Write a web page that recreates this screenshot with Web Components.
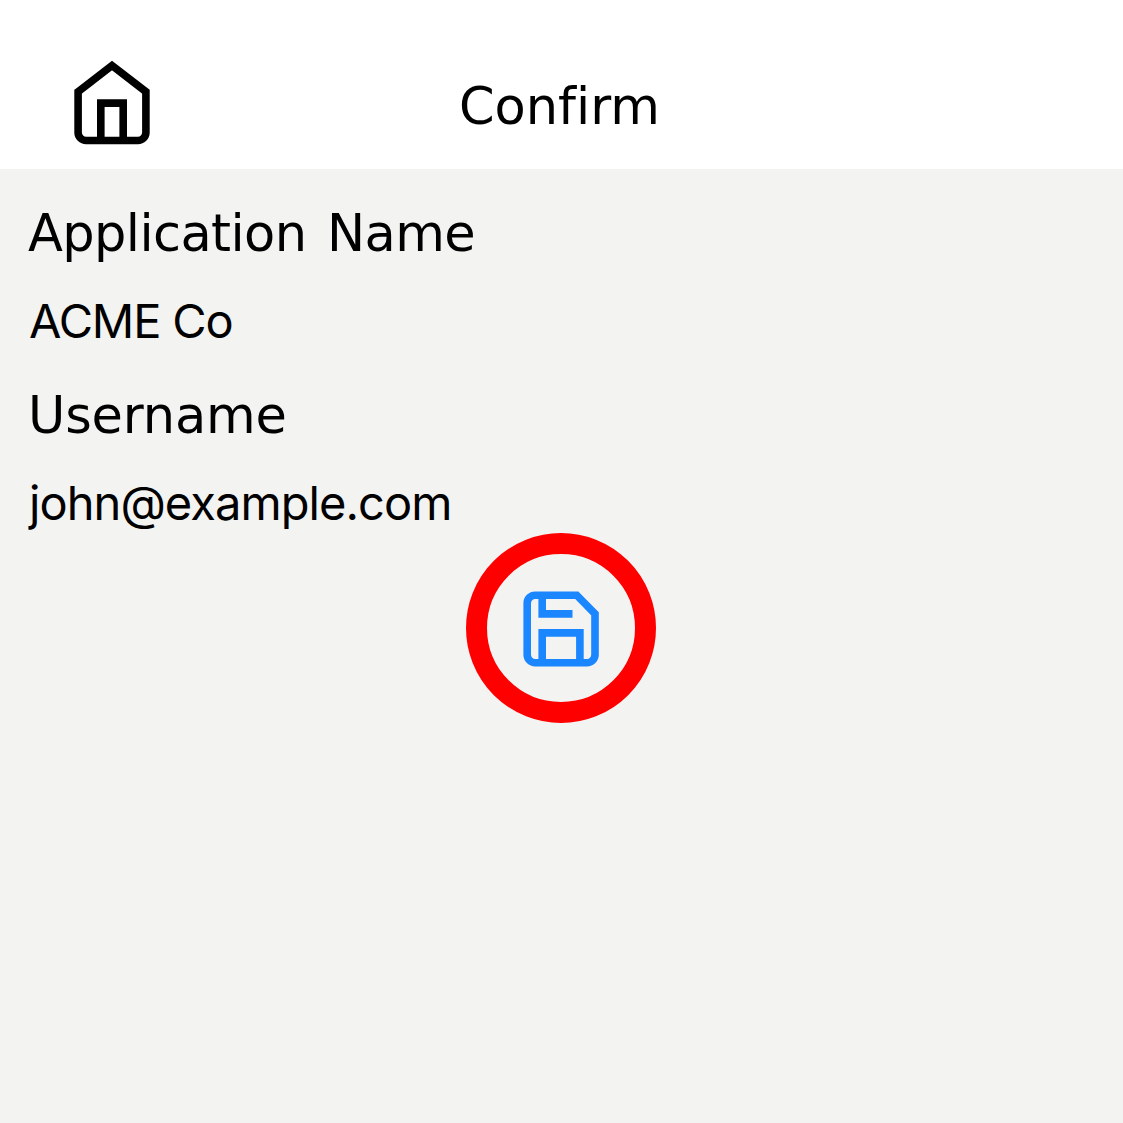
<!DOCTYPE html>
<html lang="en"><head><meta charset="utf-8"><title>Confirm</title>
<style>html,body{margin:0;background:#f3f3f1}</style></head><body>
<confirm-page></confirm-page>
<script>
class AppHeader extends HTMLElement{constructor(){super();this.attachShadow({mode:'open'}).innerHTML=`
<style>:host{display:grid;grid-template-columns:224px 1fr 224px;height:169px;background:#fff;color:#000}
.i{display:flex;justify-content:center;padding-top:58px}svg{display:block}
.t{text-align:center;padding-top:76px;margin-right:4px;font:51px/62px "DejaVu Sans",Verdana,sans-serif;font-variant-ligatures:none;white-space:nowrap}</style>
<div class="i"><svg width="90" height="90" viewBox="67 58 90 90" fill="none" stroke="#000" stroke-width="7.6"><path d="M78.100 91.700 112 65.600 145.900 91.700V132.500A8 8 0 0 1 137.900 140.500H86.100A8 8 0 0 1 78.100 132.500Z"/><path d="M100.800 140V103.100H123.200V140"/></svg></div>
<div class="t"><slot></slot></div>`}}
customElements.define('app-header',AppHeader);
class DetailField extends HTMLElement{constructor(){super();this.attachShadow({mode:'open'}).innerHTML=`
<style>:host{display:block;height:182px;color:#000;white-space:nowrap}
.l{height:89px;margin-left:-1px;font:51px/62px "DejaVu Sans",Verdana,sans-serif;letter-spacing:var(--label-spacing);word-spacing:5px}
.v{font:47px/58px Inter,sans-serif;letter-spacing:var(--value-spacing)}</style>
<div class="l"><slot name="label"></slot></div><div class="v"><slot name="value"></slot></div>`}}
customElements.define('detail-field',DetailField);
class SaveButton extends HTMLElement{constructor(){super();this.attachShadow({mode:'open'}).innerHTML=`
<style>:host{display:flex;justify-content:center;align-items:center;box-sizing:border-box;width:190px;height:190px;border:21px solid #f00;border-radius:50%}svg{display:block}</style>
<svg width="90" height="90" viewBox="516 583 90 90" fill="none" stroke="#1a86ff" stroke-width="7.6"><path d="M535.200 595.200H576.700L595 613.800V654.700A8 8 0 0 1 587 662.700H535.200A8 8 0 0 1 527.200 654.700V603.200A8 8 0 0 1 535.200 595.200Z"/><path d="M542.200 597V613.900H572.500M542.200 662V632.900H579.900V662"/></svg>`}}
customElements.define('save-button',SaveButton);
class ConfirmPage extends HTMLElement{constructor(){super();this.attachShadow({mode:'open'}).innerHTML=`
<style>:host{display:block;width:1123px;height:1123px;background:#f3f3f1;overflow:hidden}
main{display:flex;flex-direction:column;padding:34px 29px 0}
.app{--label-spacing:-.6px;--value-spacing:-1.15px}
.user{--label-spacing:-.15px;--value-spacing:-.93px}
save-button{align-self:center;margin:-34px 0 0 -1px}</style>
<app-header><span>Confirm</span></app-header><main>
<detail-field class="app"><span slot="label">Application Name</span><span slot="value">ACME Co</span></detail-field>
<detail-field class="user"><span slot="label">Username</span><span slot="value">john@example.com</span></detail-field>
<save-button></save-button></main>`}}
customElements.define('confirm-page',ConfirmPage);
</script></body></html>
